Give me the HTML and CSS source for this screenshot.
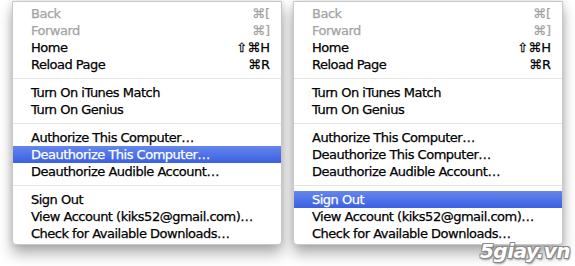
FILE: index.html
```html
<!DOCTYPE html>
<html lang="en">
<head>
  <meta charset="UTF-8" />
  <title>iTunes Store menu</title>
  <link rel="stylesheet" href="styles.css">
</head>
<body>

  <div class="menus">
    <ul class="menu">
      <li class="item off"><span>Back</span><span class="key">⌘[</span></li>
      <li class="item off"><span>Forward</span><span class="key">⌘]</span></li>
      <li class="item"><span>Home</span><span class="key">⇧⌘H</span></li>
      <li class="item"><span>Reload Page</span><span class="key">⌘R</span></li>
      <li class="sep"></li>
      <li class="item"><span>Turn On iTunes Match</span></li>
      <li class="item"><span>Turn On Genius</span></li>
      <li class="sep"></li>
      <li class="item"><span>Authorize This Computer…</span></li>
      <li class="item active"><span>Deauthorize This Computer…</span></li>
      <li class="item"><span>Deauthorize Audible Account…</span></li>
      <li class="sep"></li>
      <li class="item"><span>Sign Out</span></li>
      <li class="item"><span>View Account (kiks52@gmail.com)…</span></li>
      <li class="item"><span>Check for Available Downloads…</span></li>
    </ul>

    <ul class="menu">
      <li class="item off"><span>Back</span><span class="key">⌘[</span></li>
      <li class="item off"><span>Forward</span><span class="key">⌘]</span></li>
      <li class="item"><span>Home</span><span class="key">⇧⌘H</span></li>
      <li class="item"><span>Reload Page</span><span class="key">⌘R</span></li>
      <li class="sep"></li>
      <li class="item"><span>Turn On iTunes Match</span></li>
      <li class="item"><span>Turn On Genius</span></li>
      <li class="sep"></li>
      <li class="item"><span>Authorize This Computer…</span></li>
      <li class="item"><span>Deauthorize This Computer…</span></li>
      <li class="item"><span>Deauthorize Audible Account…</span></li>
      <li class="sep"></li>
      <li class="item active"><span>Sign Out</span></li>
      <li class="item"><span>View Account (kiks52@gmail.com)…</span></li>
      <li class="item"><span>Check for Available Downloads…</span></li>
    </ul>
  </div>

  <div class="watermark">5giay.vn</div>

</body>
</html>
```

FILE: styles.css
```css
body {
  margin: 0;
  padding: 0;
  width: 575px;
  height: 266px;
  overflow: hidden;
  background: #fff;
  font-family: "DejaVu Sans", "Liberation Sans", sans-serif;
  font-size: 13px;
  color: #000;
  position: relative;
}

.menus {
  display: flex;
  gap: 11px;
  padding: 1px 0 0 12px;
}

.menu {
  list-style: none;
  margin: 0;
  padding: 3px 0 2px;
  width: 268px;
  background: #fff;
  border: 1px solid #c9c9c9;
  border-radius: 0 0 4px 4px;
  box-shadow: 0 9px 14px rgba(0, 0, 0, 0.3), 0 0 7px rgba(0, 0, 0, 0.14);
}

.item {
  display: flex;
  justify-content: space-between;
  align-items: center;
  height: 17px;
  line-height: 17px;
  padding: 0 11px 0 18px;
  white-space: nowrap;
  letter-spacing: -0.5px;
  -webkit-text-stroke: 0.25px currentColor;
}

.item.off {
  color: #a3a3a3;
}

.key {
  letter-spacing: 0;
}

.item.active {
  color: #fff;
  background: linear-gradient(#6586ec, #3b60e2);
}

.sep {
  height: 11px;
  display: flex;
  align-items: center;
}

.sep::before {
  content: "";
  flex: 1;
  height: 1px;
  background: #e4e4e4;
}

.watermark {
  position: absolute;
  right: 5px;
  bottom: 3px;
  font-family: "DejaVu Sans", sans-serif;
  font-style: italic;
  font-weight: bold;
  font-size: 20px;
  letter-spacing: -0.5px;
  color: #fff;
  text-shadow: -1px -1px 0 #8a8a8a, 1px -1px 0 #8a8a8a, -1px 1px 0 #8a8a8a, 1px 1px 0 #8a8a8a, 1px 2px 2px rgba(0, 0, 0, 0.4);
}
```
